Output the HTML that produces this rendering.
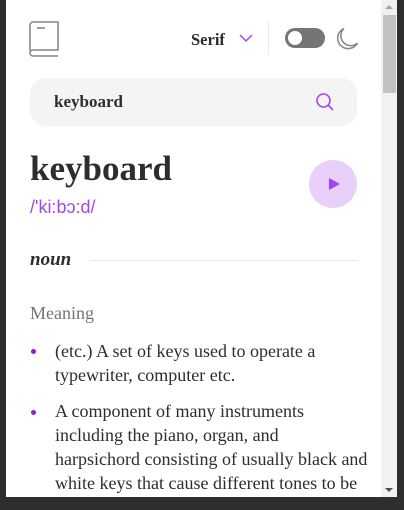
<!DOCTYPE html>
<html><head><meta charset="utf-8"><style>
*{margin:0;padding:0;box-sizing:border-box}
html,body{width:404px;height:510px;overflow:hidden;background:#2e2e2e;position:relative}
.panel{position:absolute;left:6px;top:0;width:375px;height:497px;background:#fff;overflow:hidden}
.sb{position:absolute;left:381px;top:0;width:16px;height:497px;background:#f1f1f1}
.thumb{position:absolute;left:383px;top:15px;width:13px;height:78px;background:#c1c1c1}
.a{position:absolute;white-space:nowrap}
.serif{font-family:"Liberation Serif",serif}
p.t{font-family:"Liberation Serif",serif;font-size:18px;line-height:24px;color:#2d2d2d;position:absolute;left:49px;white-space:nowrap}
.dot{position:absolute;width:5px;height:5px;border-radius:50%;background:#8f19e8;left:25px}
</style></head><body>
<div class="panel">
<svg class="a" style="left:22px;top:21px" width="34" height="36" viewBox="0 0 34 36" fill="none" stroke="#838383" stroke-width="1.5"><path d="M2 30V4a3 3 0 0 1 3-3h25v28H5a3 3 0 0 0 0 6h25"/><path d="M9 7h8"/></svg>
<div class="a serif" style="left:185px;top:30px;font-size:16.5px;font-weight:bold;color:#2d2d2d">Serif</div>
<svg class="a" style="left:233px;top:33px" width="14" height="10" viewBox="0 0 14 10" fill="none" stroke="#a445ed" stroke-width="1.5"><path d="M1 2l6 6 6-6"/></svg>
<div class="a" style="left:262px;top:22px;width:1px;height:32px;background:#e9e9e9"></div>
<div class="a" style="left:279px;top:28px;width:40px;height:20px;border-radius:10px;background:#757575"></div>
<div class="a" style="left:282px;top:31px;width:14px;height:14px;border-radius:50%;background:#fff"></div>
<svg class="a" style="left:329px;top:27px" width="24" height="24" viewBox="0 0 24 24" fill="none" stroke="#838383" stroke-width="1.5"><path d="M9 1.5A10.5 10.5 0 1 0 22.5 16 8.5 8.5 0 0 1 9 1.5z"/></svg>
<div class="a" style="left:24px;top:78px;width:327px;height:48px;border-radius:16px;background:#f4f4f4"></div>
<div class="a serif" style="left:48px;top:92px;font-size:17px;font-weight:bold;color:#2d2d2d">keyboard</div>
<svg class="a" style="left:309px;top:92px" width="20" height="20" viewBox="0 0 20 20" fill="none" stroke="#a445ed" stroke-width="1.6"><circle cx="8.5" cy="8.5" r="6.5"/><path d="M13.5 13.5l4.5 4.5"/></svg>
<div class="a serif" style="left:24px;top:147px;font-size:35px;font-weight:bold;color:#2d2d2d;line-height:44px">keyboard</div>
<div class="a" style="left:24px;top:197px;font-family:'Liberation Sans',sans-serif;font-size:18px;color:#a445ed">/'ki:bɔ:d/</div>
<div class="a" style="left:303px;top:160px;width:48px;height:48px;border-radius:50%;background:#e9d0fa"></div>
<svg class="a" style="left:322px;top:178px" width="12" height="12" viewBox="0 0 12 12"><path d="M1 0L12 6 1 12z" fill="#a445ed"/></svg>
<div class="a serif" style="left:24px;top:249px;font-size:19px;font-weight:bold;font-style:italic;color:#2d2d2d">noun</div>
<div class="a" style="left:84px;top:260px;width:268px;height:1px;background:#e9e9e9"></div>
<div class="a serif" style="left:24px;top:303px;font-size:18px;color:#757575">Meaning</div>
<div class="dot" style="top:349px"></div>
<p class="t" style="top:339px">(etc.) A set of keys used to operate a<br>typewriter, computer etc.</p>
<div class="dot" style="top:410px"></div>
<p class="t" style="top:399px">A component of many instruments<br>including the piano, organ, and<br>harpsichord consisting of usually black and<br>white keys that cause different tones to be<br>produced</p>
</div>
<div class="sb"></div><div class="thumb"></div>
<svg class="a" style="left:385px;top:4px" width="8" height="6"><path d="M0 5L4 1 8 5z" fill="#a3a3a3"/></svg>
<svg class="a" style="left:385px;top:487px" width="8" height="6"><path d="M0 1L4 5 8 1z" fill="#505050"/></svg>
</body></html>
